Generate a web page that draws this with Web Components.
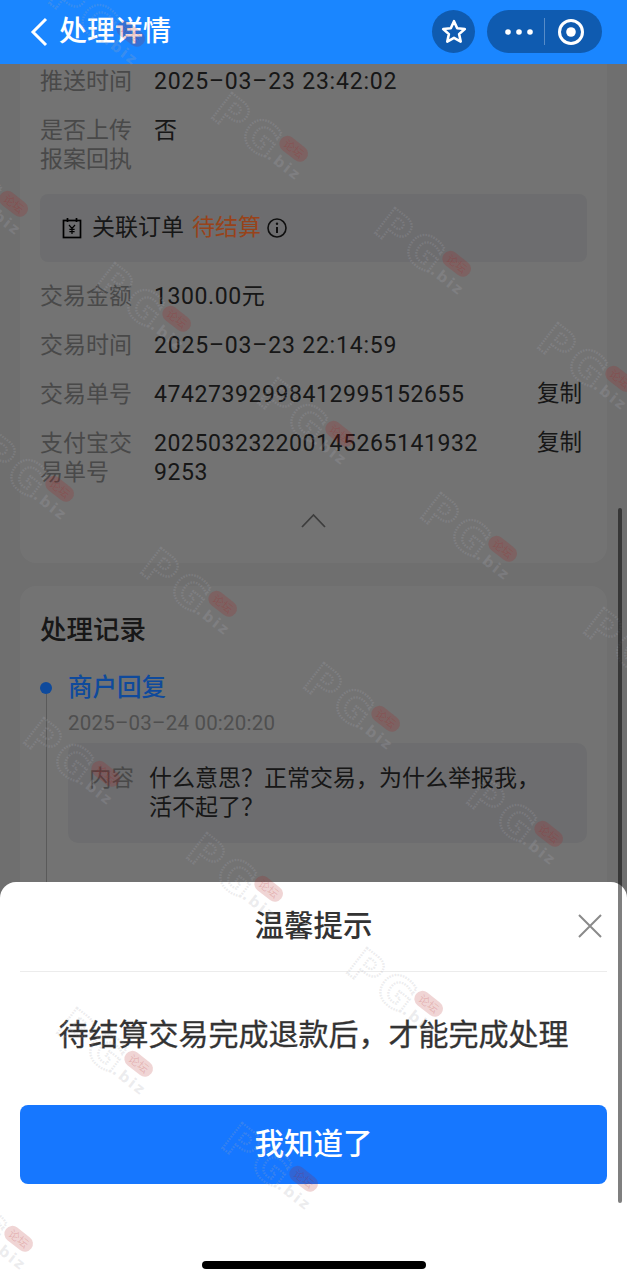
<!DOCTYPE html>
<html lang="zh-CN">
<head>
<meta charset="utf-8">
<title>处理详情</title>
<style>
  html, body { margin: 0; padding: 0; background: #f5f5f5; }
</style>
</head>
<body>
<app-page></app-page>
<script>
const FONT = `Roboto, "Noto Sans CJK SC", sans-serif`;

class NavBar extends HTMLElement {
  constructor() {
    super();
    this.attachShadow({ mode: 'open' }).innerHTML = `
      <style>
        :host {
          display: flex; align-items: center; height: 64px; box-sizing: border-box;
          padding: 0 25px 1px 30px; background: #1a86ff; color: #fff;
          font: 500 28px/1 ${FONT};
        }
        .back { width: 18px; height: 30px; margin-right: 11px; }
        .title { flex: 1; }
        .star { width: 43px; height: 43px; border-radius: 50%; background: #0f5bb0; margin-right: 12px;
          display: flex; align-items: center; justify-content: center; }
        .capsule { width: 115px; height: 43px; border-radius: 22px; background: #0f5bb0; box-sizing: border-box;
          display: flex; align-items: center; padding-right: 6px; }
        .more { width: 57px; box-sizing: border-box; padding-left: 18px; }
        .sep { width: 1px; height: 27px; background: rgba(255,255,255,.3); }
        .target { flex: 1; display: flex; justify-content: center; }
        svg { display: block; }
      </style>
      <svg class="back" viewBox="0 0 18 30"><path d="M16 2 3 15l13 13" fill="none" stroke="#fff" stroke-width="3"/></svg>
      <span class="title"><slot></slot></span>
      <div class="star">
        <svg width="28" height="28" viewBox="0 0 28 28"><path d="M14 3.2l3.2 7 7.6.8-5.7 5.1 1.6 7.5L14 19.8l-6.7 3.8 1.6-7.5L3.2 11l7.6-.8z" fill="none" stroke="#fff" stroke-width="2.6" stroke-linejoin="round"/></svg>
      </div>
      <div class="capsule">
        <div class="more"><svg width="28" height="6" viewBox="0 0 28 6"><circle cx="3" cy="3" r="2.8" fill="#fff"/><circle cx="14" cy="3" r="2.8" fill="#fff"/><circle cx="25" cy="3" r="2.8" fill="#fff"/></svg></div>
        <div class="sep"></div>
        <div class="target"><svg width="28" height="28" viewBox="0 0 28 28"><circle cx="14" cy="14" r="11.5" fill="none" stroke="#fff" stroke-width="3"/><circle cx="14" cy="14" r="4.8" fill="#fff"/></svg></div>
      </div>`;
  }
}

class InfoRow extends HTMLElement {
  constructor() {
    super();
    this.attachShadow({ mode: 'open' }).innerHTML = `
      <style>
        :host {
          display: grid; grid-template-columns: 92px 1fr auto; column-gap: 22px;
          font: 400 23px/29px ${FONT}; color: #333; margin-bottom: 20px;
        }
        :host([date]) .value { letter-spacing: .035em; }
        .label { color: #a3a3a3; }
        .value { word-break: break-all; width: 330px; letter-spacing: .025em; }
        .action { margin-right: 5px; font-size: 22.5px; margin-top: -1px; }
      </style>
      <span class="label"></span>
      <span class="value"><slot></slot></span>
      <span class="action"></span>`;
  }
  connectedCallback() {
    this.shadowRoot.querySelector('.label').textContent = this.getAttribute('label');
    this.shadowRoot.querySelector('.action').textContent = this.getAttribute('action') || '';
  }
}

class OrderLink extends HTMLElement {
  constructor() {
    super();
    this.attachShadow({ mode: 'open' }).innerHTML = `
      <style>
        :host {
          display: flex; align-items: center; height: 68px; padding-left: 22px;
          background: #f1f2f5; border-radius: 8px; margin-bottom: 20px;
          font: 400 23px/29px ${FONT}; color: #333;
        }
        .cal { margin-right: 10px; }
        /* sits above the scrim so the orange keeps its own strength */
        .state { color: #98431a; margin: 0 6px 0 8px; position: relative; z-index: 1; }
        svg { display: block; }
      </style>
      <svg class="cal" width="20" height="22" viewBox="0 0 20 22" fill="none" stroke="#000" stroke-width="1.7">
        <rect x="1.5" y="3.5" width="17" height="17"/>
        <path d="M5.5 1v4M14.5 1v4"/>
        <path d="M7 8l3 3.4L13 8M10 11.4V17M7.4 12.4h5.2M7.4 14.6h5.2" stroke-width="1.2"/>
      </svg>
      <span><slot></slot></span>
      <span class="state"><slot name="state"></slot></span>
      <svg width="20" height="20" viewBox="0 0 20 20" fill="none" stroke="#222">
        <circle cx="10" cy="10" r="9" stroke-width="1.6"/>
        <path d="M10 9v6" stroke-width="2"/>
        <circle cx="10" cy="5.8" r="1.2" fill="#222" stroke="none"/>
      </svg>`;
  }
}

class DetailCard extends HTMLElement {
  constructor() {
    super();
    this.attachShadow({ mode: 'open' }).innerHTML = `
      <style>
        :host {
          display: block; margin: 0 20px; padding: 2.5px 20px 0; height: 499px; box-sizing: border-box;
          background: #fff; border-radius: 0 0 16px 16px;
        }
        .fold { display: flex; justify-content: center; margin-top: -2px; padding-top: 8px; }
        svg { display: block; }
      </style>
      <slot></slot>
      <div class="fold"><svg width="25" height="15" viewBox="0 0 25 15"><path d="M1 14 12.5 2 24 14" fill="none" stroke="#888" stroke-width="1.8"/></svg></div>`;
  }
}

class RecordCard extends HTMLElement {
  constructor() {
    super();
    this.attachShadow({ mode: 'open' }).innerHTML = `
      <style>
        :host {
          display: block; margin: 23px 20px 0; padding: 26px 20px 0; height: 400px; box-sizing: border-box;
          background: #fff; border-radius: 16px; font-family: ${FONT};
        }
        h2 { margin: 0 0 22px; font: 500 26.5px/36px ${FONT}; color: #333; }
        .entry { display: grid; grid-template-columns: 12px 1fr; column-gap: 16px; }
        .rail { display: flex; flex-direction: column; align-items: center; padding-top: 12px; }
        .dot { width: 12px; height: 12px; border-radius: 50%; background: #0e4a9c; flex: none; position: relative; z-index: 1; }
        .line { width: 1px; height: 300px; background: #c8c8c8; flex: none; }
        .name { font: 500 24.5px/36px ${FONT}; color: #0f4a9c; position: relative; z-index: 1; }
        .time { font: 400 20.5px/28px ${FONT}; color: #b0b0b0; margin-top: 3px; letter-spacing: .01em; }
        .note {
          display: flex; margin-top: 6px; height: 100px; box-sizing: border-box;
          padding: 21px 20px 0 21px; background: #f1f2f5; border-radius: 10px;
          font: 400 23px/29px ${FONT}; color: #333;
        }
        .note b { font-weight: 400; font-size: 22.5px; color: #a3a3a3; width: 60px; flex: none; }
        .note span { width: 400px; }
      </style>
      <h2>处理记录</h2>
      <div class="entry">
        <div class="rail"><div class="dot"></div><div class="line"></div></div>
        <div>
          <div class="name">商户回复</div>
          <div class="time">2025–03–24 00:20:20</div>
          <div class="note"><b>内容</b><span>什么意思\uFF1F正常交易\uFF0C为什么举报我\uFF0C活不起了\uFF1F</span></div>
        </div>
      </div>`;
  }
}

class NoticeSheet extends HTMLElement {
  constructor() {
    super();
    this.attachShadow({ mode: 'open' }).innerHTML = `
      <style>
        :host {
          position: absolute; left: 0; right: 0; top: 882px; bottom: 0; z-index: 2;
          display: block; padding: 0 20px; background: #fff; border-radius: 16px 16px 0 0;
          font-family: ${FONT}; color: #333;
        }
        header {
          display: flex; align-items: center; justify-content: center; position: relative;
          height: 89px; border-bottom: 1px solid #ececec;
          font: 500 29.5px/1 ${FONT};
        }
        .close { position: absolute; right: 5px; top: 32px; }
        p { margin: 0 0 8px; height: 125px; display: flex; align-items: center; justify-content: center;
          font: 400 30px/40px ${FONT}; -webkit-text-stroke: .3px #333; }
        button {
          display: block; width: 100%; height: 79px; border: 0; border-radius: 8px;
          background: #1677ff; color: #fff; font: 500 29.5px/1 ${FONT};
        }
      </style>
      <header>
        <span>温馨提示</span>
        <svg class="close" width="24" height="24" viewBox="0 0 24 24"><path d="M1 1l22 22M23 1 1 23" stroke="#8a8a8a" stroke-width="2"/></svg>
      </header>
      <p><slot></slot></p>
      <button>我知道了</button>`;
  }
}

/* forum stamp repeated across the whole viewport */
class PgMark extends HTMLElement {
  constructor() {
    super();
    this.attachShadow({ mode: 'open' }).innerHTML = `
      <style>
        :host { position: absolute; display: block; width: 1px; height: 1px; pointer-events: none; }
        svg { overflow: visible; display: block; }
      </style>
      <svg width="1" height="1">
        <g transform="rotate(38)">
          <text x="5" y="16" font-family="DejaVu Sans" font-weight="700" font-size="44" letter-spacing="4"
            fill="none" stroke="rgb(170,170,180)" stroke-opacity=".22" stroke-width="2.4" stroke-dasharray="1.6 1.2">PG</text>
          <rect x="76" y="-18" width="32" height="16" rx="8" fill="rgb(170,20,20)" fill-opacity=".18"/>
          <text x="92" y="-6" text-anchor="middle" font-family="Noto Sans CJK SC" font-size="11" fill="rgb(170,20,20)" fill-opacity=".18">论坛</text>
          <text x="76" y="14" font-family="DejaVu Sans" font-weight="700" font-size="15" letter-spacing="2" fill="rgb(170,170,180)" fill-opacity=".22">.biz</text>
        </g>
      </svg>`;
  }
}

const MARKS = [
  [52, -15], [215, 100], [378, 215], [541, 330],
  [-65, 155], [98, 270], [261, 385], [424, 500], [587, 615],
  [-19, 440], [144, 555], [307, 670], [470, 785],
  [27, 725], [190, 840], [350, 955],
  [60, 1015], [225, 1130], [-60, 1190]
];

class AppPage extends HTMLElement {
  constructor() {
    super();
    const marks = MARKS.map(([x, y]) => `<pg-mark style="left:${x}px;top:${y}px"></pg-mark>`).join('');
    this.attachShadow({ mode: 'open' }).innerHTML = `
      <style>
        :host {
          display: block; position: relative; width: 627px; height: 1280px; overflow: hidden;
          background: #f5f5f5;
        }
        nav-bar { position: relative; z-index: 1; }
        .scrim { position: absolute; inset: 64px 0 0 0; background: rgba(0,0,0,.55); }
        .marks { position: absolute; inset: 0; z-index: 3; pointer-events: none; }
        .scrollbar { position: absolute; z-index: 3; left: 618px; top: 508px; width: 4px; height: 695px;
          border-radius: 2px; background: rgba(0,0,0,.5); }
        .home { position: absolute; z-index: 3; left: 202px; top: 1261px; width: 224px; height: 8px;
          border-radius: 4px; background: #000; }
      </style>
      <nav-bar>处理详情</nav-bar>
      <detail-card>
        <info-row date label="推送时间">2025–03–23 23:42:02</info-row>
        <info-row label="是否上传报案回执">否</info-row>
        <order-link>关联订单<span slot="state">待结算</span></order-link>
        <info-row label="交易金额">1300.00元</info-row>
        <info-row date label="交易时间">2025–03–23 22:14:59</info-row>
        <info-row label="交易单号" action="复制">47427392998412995152655</info-row>
        <info-row label="支付宝交易单号" action="复制">2025032322001452651419329253</info-row>
      </detail-card>
      <record-card></record-card>
      <div class="scrim"></div>
      <notice-sheet>待结算交易完成退款后&#xFF0C;才能完成处理</notice-sheet>
      <div class="marks">${marks}</div>
      <div class="scrollbar"></div>
      <div class="home"></div>`;
  }
}

customElements.define('nav-bar', NavBar);
customElements.define('info-row', InfoRow);
customElements.define('order-link', OrderLink);
customElements.define('detail-card', DetailCard);
customElements.define('record-card', RecordCard);
customElements.define('notice-sheet', NoticeSheet);
customElements.define('pg-mark', PgMark);
customElements.define('app-page', AppPage);
</script>
</body>
</html>
